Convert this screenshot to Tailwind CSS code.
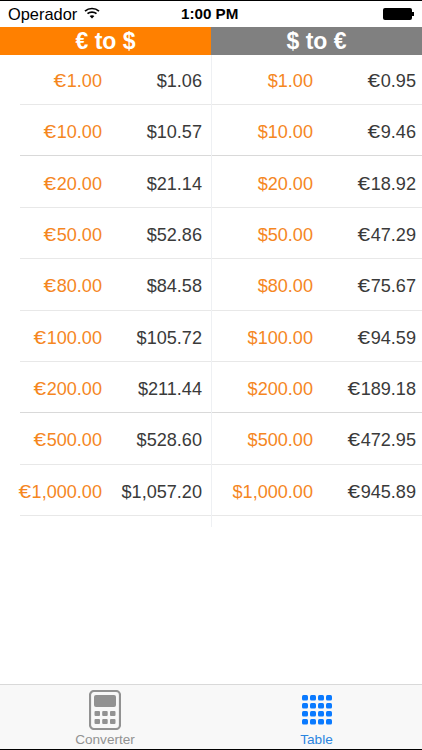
<!DOCTYPE html>
<html lang="en">
<head>
    <meta charset="UTF-8">
    <meta name="viewport" content="width=device-width, initial-scale=1.0">
    <title>Currency Table</title>
    <script src="https://cdn.jsdelivr.net/npm/@tailwindcss/browser@4"></script>
</head>
<body class="bg-white overflow-hidden">
<div class="w-[422px] h-[750px] flex flex-col font-['Liberation_Sans',Arial,sans-serif] border-t border-b border-black">

    <!-- Status bar -->
    <div class="h-[26px] shrink-0 pl-[8px] pr-[8px] flex items-center justify-between relative text-[16.4px] text-black">
        <div class="flex items-center gap-[7px]">
            <span>Operador</span>
            <svg width="16" height="12" viewBox="0 0 16 12" fill="none" stroke="#000" class="-mt-[2px]">
                <path d="M1 4.2C5 .6 11 .6 15 4.2" stroke-width="1.7"/>
                <path d="M3.5 6.7C6 4.5 10 4.5 12.5 6.7" stroke-width="1.7"/>
                <path d="M8 11.5L5.6 9c1.4-1.1 3.4-1.1 4.8 0z" fill="#000" stroke="none"/>
            </svg>
        </div>
        <span class="absolute left-[181px] font-bold text-[15.2px]">1:00 PM</span>
        <div class="flex items-center">
            <div class="w-[29px] h-[12px] bg-black rounded-[2px]"></div>
            <div class="w-[2px] h-[4px] bg-black"></div>
        </div>
    </div>

    <!-- Headers -->
    <div class="h-[28px] shrink-0 grid grid-cols-[211px_211px] text-white font-bold text-[23px] text-center leading-[28px]">
        <div class="bg-[#ff8000]">€ to $</div>
        <div class="bg-[#808080]">$ to €</div>
    </div>

    <!-- Table -->
    <div class="grid grid-cols-[211px_211px] h-[472px] text-[18.1px] shrink-0">
        <div class="pl-[20px]">
            <div class="h-[50px] pt-[5px] border-b border-[#e8e8e8] flex items-center pr-[9px]"><span class="-ml-[2px] w-[84px] text-right text-[#f5871f]"><span class="inline-block scale-x-125 origin-right mr-[0.5px]">€</span>1.00</span><span class="flex-1 text-right text-[#3a3a3a]">$1.06</span></div>
            <div class="h-[51.4px] pt-[5px] border-b border-[#d9d9d9] flex items-center pr-[9px]"><span class="-ml-[2px] w-[84px] text-right text-[#f5871f]"><span class="inline-block scale-x-125 origin-right mr-[0.5px]">€</span>10.00</span><span class="flex-1 text-right text-[#3a3a3a]">$10.57</span></div>
            <div class="h-[51.4px] pt-[5px] border-b border-[#e8e8e8] flex items-center pr-[9px]"><span class="-ml-[2px] w-[84px] text-right text-[#f5871f]"><span class="inline-block scale-x-125 origin-right mr-[0.5px]">€</span>20.00</span><span class="flex-1 text-right text-[#3a3a3a]">$21.14</span></div>
            <div class="h-[51.4px] pt-[5px] border-b border-[#e8e8e8] flex items-center pr-[9px]"><span class="-ml-[2px] w-[84px] text-right text-[#f5871f]"><span class="inline-block scale-x-125 origin-right mr-[0.5px]">€</span>50.00</span><span class="flex-1 text-right text-[#3a3a3a]">$52.86</span></div>
            <div class="h-[51.4px] pt-[5px] border-b border-[#e8e8e8] flex items-center pr-[9px]"><span class="-ml-[2px] w-[84px] text-right text-[#f5871f]"><span class="inline-block scale-x-125 origin-right mr-[0.5px]">€</span>80.00</span><span class="flex-1 text-right text-[#3a3a3a]">$84.58</span></div>
            <div class="h-[51.4px] pt-[5px] border-b border-[#e8e8e8] flex items-center pr-[9px]"><span class="-ml-[2px] w-[84px] text-right text-[#f5871f]"><span class="inline-block scale-x-125 origin-right mr-[0.5px]">€</span>100.00</span><span class="flex-1 text-right text-[#3a3a3a]">$105.72</span></div>
            <div class="h-[51.4px] pt-[5px] border-b border-[#d9d9d9] flex items-center pr-[9px]"><span class="-ml-[2px] w-[84px] text-right text-[#f5871f]"><span class="inline-block scale-x-125 origin-right mr-[0.5px]">€</span>200.00</span><span class="flex-1 text-right text-[#3a3a3a]">$211.44</span></div>
            <div class="h-[51.4px] pt-[5px] border-b border-[#e8e8e8] flex items-center pr-[9px]"><span class="-ml-[2px] w-[84px] text-right text-[#f5871f]"><span class="inline-block scale-x-125 origin-right mr-[0.5px]">€</span>500.00</span><span class="flex-1 text-right text-[#3a3a3a]">$528.60</span></div>
            <div class="h-[51.4px] pt-[5px] border-b border-[#e8e8e8] flex items-center pr-[9px]"><span class="-ml-[2px] w-[84px] text-right text-[#f5871f]"><span class="inline-block scale-x-125 origin-right mr-[0.5px]">€</span>1,000.00</span><span class="flex-1 text-right text-[#3a3a3a]">$1,057.20</span></div>
        </div>
        <div class="border-l border-[#eef0f3]">
            <div class="h-[50px] pt-[5px] border-b border-[#e8e8e8] flex items-center pr-[6px]"><span class="w-[101px] text-right text-[#f5871f]">$1.00</span><span class="flex-1 text-right text-[#3a3a3a]"><span class="inline-block scale-x-125 origin-right mr-[0.5px]">€</span>0.95</span></div>
            <div class="h-[51.4px] pt-[5px] border-b border-[#d9d9d9] flex items-center pr-[6px]"><span class="w-[101px] text-right text-[#f5871f]">$10.00</span><span class="flex-1 text-right text-[#3a3a3a]"><span class="inline-block scale-x-125 origin-right mr-[0.5px]">€</span>9.46</span></div>
            <div class="h-[51.4px] pt-[5px] border-b border-[#e8e8e8] flex items-center pr-[6px]"><span class="w-[101px] text-right text-[#f5871f]">$20.00</span><span class="flex-1 text-right text-[#3a3a3a]"><span class="inline-block scale-x-125 origin-right mr-[0.5px]">€</span>18.92</span></div>
            <div class="h-[51.4px] pt-[5px] border-b border-[#e8e8e8] flex items-center pr-[6px]"><span class="w-[101px] text-right text-[#f5871f]">$50.00</span><span class="flex-1 text-right text-[#3a3a3a]"><span class="inline-block scale-x-125 origin-right mr-[0.5px]">€</span>47.29</span></div>
            <div class="h-[51.4px] pt-[5px] border-b border-[#e8e8e8] flex items-center pr-[6px]"><span class="w-[101px] text-right text-[#f5871f]">$80.00</span><span class="flex-1 text-right text-[#3a3a3a]"><span class="inline-block scale-x-125 origin-right mr-[0.5px]">€</span>75.67</span></div>
            <div class="h-[51.4px] pt-[5px] border-b border-[#e8e8e8] flex items-center pr-[6px]"><span class="w-[101px] text-right text-[#f5871f]">$100.00</span><span class="flex-1 text-right text-[#3a3a3a]"><span class="inline-block scale-x-125 origin-right mr-[0.5px]">€</span>94.59</span></div>
            <div class="h-[51.4px] pt-[5px] border-b border-[#d9d9d9] flex items-center pr-[6px]"><span class="w-[101px] text-right text-[#f5871f]">$200.00</span><span class="flex-1 text-right text-[#3a3a3a]"><span class="inline-block scale-x-125 origin-right mr-[0.5px]">€</span>189.18</span></div>
            <div class="h-[51.4px] pt-[5px] border-b border-[#e8e8e8] flex items-center pr-[6px]"><span class="w-[101px] text-right text-[#f5871f]">$500.00</span><span class="flex-1 text-right text-[#3a3a3a]"><span class="inline-block scale-x-125 origin-right mr-[0.5px]">€</span>472.95</span></div>
            <div class="h-[51.4px] pt-[5px] border-b border-[#e8e8e8] flex items-center pr-[6px]"><span class="w-[101px] text-right text-[#f5871f]">$1,000.00</span><span class="flex-1 text-right text-[#3a3a3a]"><span class="inline-block scale-x-125 origin-right mr-[0.5px]">€</span>945.89</span></div>
        </div>
    </div>

    <div class="flex-1"></div>

    <!-- Tab bar -->
    <div class="h-[65px] shrink-0 bg-[#f8f8f8] border-t border-[#d9d9d9] grid grid-cols-[211px_211px] text-[13.6px] text-center">
        <div class="flex flex-col items-center pt-[5px] pr-[1px] text-[#929292]">
            <svg width="32" height="40" viewBox="0 0 32 40" class="block">
                <rect x="1" y="1" width="30" height="38" rx="4" fill="none" stroke="#929292" stroke-width="2.2"/>
                <rect x="5" y="5" width="22" height="12" rx="2" fill="#929292"/>
                <rect x="5.5" y="21" width="5.5" height="5" rx="1" fill="#929292"/>
                <rect x="13.2" y="21" width="5.5" height="5" rx="1" fill="#929292"/>
                <rect x="21" y="21" width="5.5" height="5" rx="1" fill="#929292"/>
                <rect x="5.5" y="29" width="5.5" height="5" rx="1" fill="#929292"/>
                <rect x="13.2" y="29" width="5.5" height="5" rx="1" fill="#929292"/>
                <rect x="21" y="29" width="5.5" height="5" rx="1" fill="#929292"/>
            </svg>
            <span class="leading-[14px] mt-[3px]">Converter</span>
        </div>
        <div class="flex flex-col items-center pt-[5px] text-[#2a85e0]">
            <svg width="32" height="40" viewBox="0 0 32 40" class="block" fill="#0a7aff">
                <rect x="1" y="5" width="6" height="5.5" rx="1.5"/><rect x="9" y="5" width="6" height="5.5" rx="1.5"/><rect x="17" y="5" width="6" height="5.5" rx="1.5"/><rect x="25" y="5" width="6" height="5.5" rx="1.5"/>
                <rect x="1" y="13" width="6" height="5.5" rx="1.5"/><rect x="9" y="13" width="6" height="5.5" rx="1.5"/><rect x="17" y="13" width="6" height="5.5" rx="1.5"/><rect x="25" y="13" width="6" height="5.5" rx="1.5"/>
                <rect x="1" y="21" width="6" height="5.5" rx="1.5"/><rect x="9" y="21" width="6" height="5.5" rx="1.5"/><rect x="17" y="21" width="6" height="5.5" rx="1.5"/><rect x="25" y="21" width="6" height="5.5" rx="1.5"/>
                <rect x="1" y="29" width="6" height="5.5" rx="1.5"/><rect x="9" y="29" width="6" height="5.5" rx="1.5"/><rect x="17" y="29" width="6" height="5.5" rx="1.5"/><rect x="25" y="29" width="6" height="5.5" rx="1.5"/>
            </svg>
            <span class="leading-[14px] mt-[3px]">Table</span>
        </div>
    </div>
</div>
</body>
</html>
